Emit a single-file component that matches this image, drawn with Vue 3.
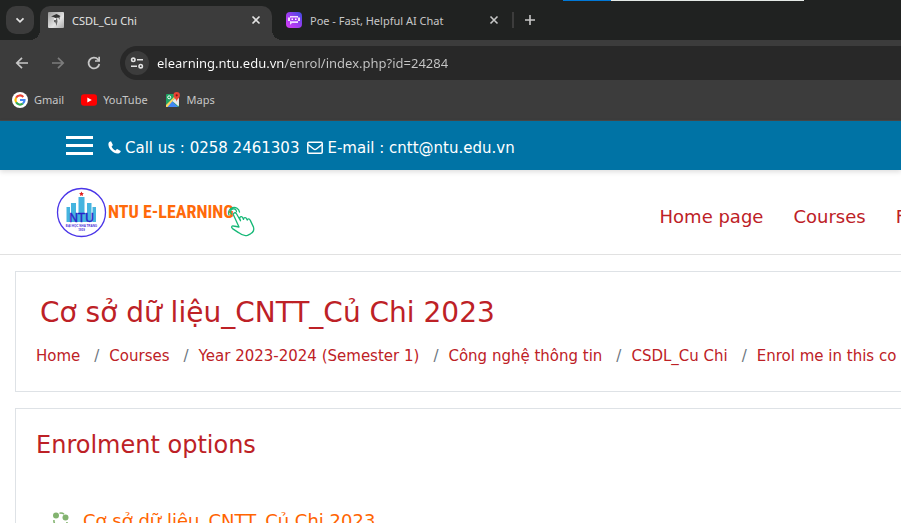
<script setup>
import { ref } from 'vue'

const url = ref('elearning.ntu.edu.vn/enrol/index.php?id=24284')
const crumbs = ['Home', 'Courses', 'Year 2023-2024 (Semester 1)', 'Công nghệ thông tin', 'CSDL_Cu Chi', 'Enrol me in this co']
const menu = ['Home page', 'Courses', 'F']
</script>

<template>
  <div class="window">
    <div class="progress"><span class="progress-done"></span></div>
    <div class="tabs">
      <button class="tab-search" aria-label="Search tabs">
        <svg width="12" height="12" viewBox="0 0 12 12"><path d="M2.5 4.3 6 7.8l3.500-3.500" fill="none" stroke="#e3e3e3" stroke-width="1.700" /></svg>
      </button>
      <div class="tab active">
        <svg class="favicon" width="16" height="16" viewBox="0 0 16 16">
          <defs><linearGradient id="shade" x1="0" y1="0" x2="1" y2="1"><stop offset="0" stop-color="#999" /><stop offset=".6" stop-color="#e4e4e4" /><stop offset="1" stop-color="#aaa" /></linearGradient></defs>
          <rect width="16" height="16" rx="1" fill="url(#shade)" />
          <path d="M3 4.500 8.500 2l4 2-1 1v3l-1-2.500-3 .5-2-1z" fill="#333" />
          <path d="M6 6.500h3l.5 3-1 4.500-1-3.500-1.500-.5z" fill="#666" />
          <path d="M6 6h2v2H6z" fill="#eee" />
        </svg>
        <span class="tab-title">CSDL_Cu Chi</span>
        <button class="close" aria-label="Close tab"><svg width="10" height="10" viewBox="0 0 10 10"><path d="m1.500 1.500 7 7m0-7-7 7" stroke="#e3e3e3" stroke-width="1.600" /></svg></button>
      </div>
      <div class="tab">
        <svg class="favicon" width="16" height="16" viewBox="0 0 16 16">
          <defs><linearGradient id="poe" x1="0" y1="1" x2="1" y2="0"><stop offset="0" stop-color="#d63cf5" /><stop offset=".5" stop-color="#9a3df0" /><stop offset="1" stop-color="#3a4be0" /></linearGradient></defs>
          <rect width="16" height="16" rx="4" fill="url(#poe)" />
          <path d="M4 4h8v1.500h2v3.500h-2V11H6l-1.500 1.500H4V9H2V5.500h2z" fill="#f0dcff" />
          <rect x="4" y="5.500" width="8" height="3.800" rx="1" fill="#a03cf0" />
          <path d="M5.500 6.500H7V8H5.500zm3.500 0h1.500V8H9z" fill="#fff" />
        </svg>
        <span class="tab-title">Poe - Fast, Helpful AI Chat</span>
        <button class="close" aria-label="Close tab"><svg width="10" height="10" viewBox="0 0 10 10"><path d="m1.500 1.500 7 7m0-7-7 7" stroke="#c7c7c7" stroke-width="1.600" /></svg></button>
      </div>
      <button class="new-tab" aria-label="New tab"><svg width="12" height="12" viewBox="0 0 12 12"><path d="M6 1v10M1 6h10" stroke="#c7c7c7" stroke-width="1.600" /></svg></button>
    </div>

    <div class="toolbar">
      <button class="tool" aria-label="Back"><svg width="16" height="16" viewBox="0 0 16 16"><path d="M14 8H3m5-5.200L2.800 8 8 13.200" fill="none" stroke="#c7c7c7" stroke-width="1.700" /></svg></button>
      <button class="tool" aria-label="Forward"><svg width="16" height="16" viewBox="0 0 16 16"><path d="M2 8h11M8 2.800 13.200 8 8 13.200" fill="none" stroke="#7c7c7c" stroke-width="1.700" /></svg></button>
      <button class="tool" aria-label="Reload"><svg width="16" height="16" viewBox="0 0 16 16"><path d="M13.300 9A5.400 5.400 0 1 1 12 4.400l1 1" fill="none" stroke="#c7c7c7" stroke-width="1.800" /><path d="M14 1.800v5H9V5.200h3.300V1.800z" fill="#c7c7c7" /></svg></button>
      <div class="address">
        <button class="site-info" aria-label="View site information">
          <svg width="14" height="14" viewBox="0 0 14 14" fill="none" stroke="#e3e3e3" stroke-width="1.600"><circle cx="3.300" cy="3.800" r="1.700" /><path d="M7 3.800h6M1 10.200h6" /><circle cx="10.700" cy="10.200" r="1.700" /></svg>
        </button>
        <input v-model="url" class="url" type="text" aria-label="Address" />
      </div>
    </div>

    <nav class="bookmarks" aria-label="Bookmarks">
      <a href="#">
        <svg width="16" height="16" viewBox="0 0 16 16"><circle cx="8" cy="8" r="8" fill="#fff" /><g fill="none" stroke-width="2.200"><path d="M4.100 5.700A4.500 4.500 0 0 1 11.300 4.900" stroke="#ea4335" /><path d="M4.100 10.300a4.500 4.500 0 0 1 0-4.600" stroke="#fbbc05" /><path d="M4.100 10.300a4.500 4.500 0 0 0 6.800 1.200" stroke="#34a853" /><path d="M8 8h4.500a4.500 4.500 0 0 1-1.600 3.500" stroke="#4285f4" /></g></svg>
        Gmail
      </a>
      <a href="#">
        <svg width="16" height="16" viewBox="0 0 16 16"><rect y="2.300" width="16" height="11.400" rx="3" fill="#f00" /><path d="m6.300 5.500 4.500 2.500-4.500 2.500z" fill="#fff" /></svg>
        YouTube
      </a>
      <a href="#">
        <svg width="16" height="16" viewBox="0 0 16 16"><rect x="1" y="2" width="13" height="13" rx="1" fill="#1fa463" /><path d="m1 15 6-6 6 6z" fill="#4285f4" /><path d="m7 9 7-6v11z" fill="#ddd" /><path d="m1 13 11-11h1.500L2.500 15H1z" fill="#fdd663" /><path d="m7.500 8.500 6 6V7z" fill="#e8eaed" /><circle cx="4.200" cy="5.300" r="1.500" fill="none" stroke="#fff" /><path d="M11.700 10C11.700 7 8.500 6.300 8.500 3.300a3.200 3.200 0 0 1 6.400 0c0 3-3.200 3.700-3.200 6.700z" fill="#ea4335" /><circle cx="11.700" cy="3.300" r="1.100" fill="#7b1c14" /></svg>
        Maps
      </a>
    </nav>

    <div class="page">
      <div class="contact">
        <button class="hamburger" aria-label="Menu"><span></span><span></span><span></span></button>
        <div class="contact-list">
          <p>
            <svg width="13" height="13" viewBox="0 0 13 13"><path d="M.6 2.100C1 1 2 .4 3 .3l1.900 3.600c-.2.700-1.100 1-1.300 1.500.5 1.700 2.400 3.500 4.100 4 .5-.2.800-1.200 1.500-1.300l3.500 1.800c.1 1-.5 2-1.600 2.400C6.300 14-.9 7 .6 2.100z" fill="#fff" /></svg>
            Call us : 0258 2461303
          </p>
          <p>
            <svg width="16" height="13" viewBox="0 0 16 13"><g fill="none" stroke="#fff" stroke-width="1.500"><rect x=".8" y="1.300" width="14.400" height="10.900" rx="1" /><path d="m1 3.500 5.700 4.500q1.300 1 2.600 0L15 3.500" /></g></svg>
            E-mail : cntt@ntu.edu.vn
          </p>
        </div>
      </div>

      <header class="site">
        <a href="#" class="brand" aria-label="NTU E-Learning">
          <svg width="200" height="52" viewBox="0 0 200 52">
            <circle cx="25.500" cy="26.500" r="24" fill="#fff" stroke="#4a35e8" stroke-width="1.300" />
            <path d="m25.500 5.500.7 1.500 1.700.2-1.200 1.100.3 1.700-1.500-.8-1.500.8.300-1.700L23 7.200l1.700-.2z" fill="#e02020" />
            <path d="M10.500 21H14v15h-3.500zM15 17h5v19h-5zM22.500 11h6v25h-6zM31 17h4.500v19H31zM36.500 21H40v15h-3.500zM20 27h11v9H20z" fill="#45b4df" />
            <text x="25.500" y="36" text-anchor="middle" class="seal">NTU</text>
            <text x="25.500" y="41" text-anchor="middle" class="seal-name">ĐẠI HỌC NHA TRANG</text>
            <text x="25.500" y="45" text-anchor="middle" class="seal-name">1959</text>
            <text x="52" y="32" class="wordmark">NTU E-LEARNING</text>
            <g fill="none" stroke="#16b877" stroke-width="1.300" stroke-linecap="round" stroke-linejoin="round">
              <path d="M173 29a5.500 5.500 0 1 1 10.500-3M175.500 28a3 3 0 1 1 5-2.500" />
              <path d="m183 41-5.500-12c-.7-2 2-3.200 3-1.300l4 7-.7-2.200c-.4-2 2.200-2.700 3-.8l.7 1.700c0-2 2.500-2.300 3.200-.5l.5 1.200c.3-1.600 2.300-1.700 3 0l3.300 7c1 3-.2 5-3 6.700l-3 1.500c-4 1.300-6.500-.7-9-2.700l-6-4c-1.800-1.600-.5-3 1-2.600z" fill="#fff" />
            </g>
          </svg>
        </a>
        <nav class="menu" aria-label="Main"><a v-for="item in menu" :key="item" href="#">{{ item }}</a></nav>
      </header>

      <main>
        <section class="card">
          <h1>Cơ sở dữ liệu_CNTT_Củ Chi 2023</h1>
          <ol class="crumbs"><li v-for="crumb in crumbs" :key="crumb"><a href="#">{{ crumb }}</a></li></ol>
        </section>
        <section class="card">
          <h2>Enrolment options</h2>
          <h3>
            <svg width="18" height="18" viewBox="0 0 18 18"><g fill="#82b36f"><circle cx="4" cy="3.500" r="3" /><circle cx="13.500" cy="5.500" r="3" /><circle cx="9" cy="14.500" r="3" /></g><path d="M7.500 1.200q3-.5 4.500 1M2 8q-.5 3 2 5M15 10q0 2-2 3.500" fill="none" stroke="#82b36f" stroke-width="1.500" /></svg>
            <a href="#">Cơ sở dữ liệu_CNTT_Củ Chi 2023</a>
          </h3>
        </section>
      </main>
    </div>
  </div>
</template>

<style>
body { margin: 0; background: #fff; }
</style>

<style scoped>
* { box-sizing: border-box; }
button { padding: 0; border: 0; background: none; display: grid; place-items: center; flex: none; }
a { color: inherit; text-decoration: none; }
svg { flex: none; }
.window { position: relative; height: 100vh; overflow: hidden; background: #3c3c3c; font-family: "Noto Sans", "Open Sans", sans-serif; font-size: 11px; color: #c7c7c7; }
.progress { position: absolute; top: 0; left: 563px; width: 241px; height: 1px; background: #e4e9e6; }
.progress-done { display: block; width: 20%; height: 1px; background: #0078d7; }
.tabs { display: flex; align-items: flex-start; height: 40px; padding: 6px 6px 0; background: #202221; }
.tab-search { width: 28px; height: 28px; border-radius: 10px; background: #3c3c3c; margin-right: 6px; }
.tab { display: flex; align-items: center; gap: 8px; width: 238px; height: 34px; padding: 0 10px 6px 14px; }
.tab.active { position: relative; width: 232px; padding-left: 8px; background: #3c3c3c; border-radius: 10px 10px 0 0; color: #e3e3e3; }
.tab.active::before, .tab.active::after { content: ""; position: absolute; bottom: 0; width: 10px; height: 10px; }
.tab.active::before { right: 100%; background: radial-gradient(circle at 0 0, transparent 10px, #3c3c3c 10px); }
.tab.active::after { left: 100%; background: radial-gradient(circle at 100% 0, transparent 10px, #3c3c3c 10px); }
.tab-title { flex: 1; white-space: nowrap; }
.close { width: 12px; height: 16px; }
.new-tab { width: 34px; height: 16px; margin: 6px 0 0 2px; border-left: 2px solid #3c3c3c; }
.toolbar { display: flex; align-items: center; height: 46px; padding-left: 14px; }
.tool { width: 16px; height: 16px; margin-right: 20px; }
.address { display: flex; align-items: center; flex: 1; height: 34px; margin-left: -2px; padding-left: 5px; gap: 8px; border-radius: 17px 0 0 17px; background: #282828; }
.site-info { width: 24px; height: 24px; border-radius: 12px; background: #3c3c3c; }
.url { flex: 1; min-width: 0; padding: 0; border: 0; outline: 0; font: 13px "Noto Sans", "Open Sans", sans-serif; color: transparent; background: linear-gradient(90deg, #fff 127px, #c7c7c7 127px); background-clip: text; }
.bookmarks { display: flex; align-items: center; gap: 17px; height: 35px; padding: 0 12px 7px; border-bottom: 1px solid #484848; }
.bookmarks a { display: flex; align-items: center; gap: 6px; }
.page { background: #fff; font-family: "DejaVu Sans", Verdana, sans-serif; color: #bd2126; }
.contact { position: relative; display: flex; align-items: center; gap: 15px; height: 49px; padding-left: 66px; background: #0073a5; color: #fff; box-shadow: 0 2px 5px #0002; }
.contact-list { display: flex; gap: 8px; padding-top: 4px; }
.contact p { display: flex; align-items: center; gap: 4px; margin: 0; font-size: 15px; line-height: 20px; white-space: nowrap; }
.hamburger { width: 27px; gap: 5px; }
.hamburger span { width: 27px; height: 3px; background: #fff; }
.site { display: flex; align-items: center; height: 85px; padding-left: 56px; border-bottom: 1px solid #e1e1e1; }
.brand { display: block; height: 52px; }
.seal { font: 12px "Liberation Sans", sans-serif; fill: #2a20c8; stroke: #2a20c8; stroke-width: .4; }
.seal-name { font: bold 3px "Liberation Sans", sans-serif; fill: #4b32d8; }
.wordmark { font: bold 18px "Liberation Sans Narrow", "Roboto Condensed", Roboto, sans-serif; fill: #ff6a0a; }
.menu { display: flex; gap: 30px; margin: 10px -5px 0 auto; font-size: 18px; line-height: 24px; white-space: nowrap; }
main { display: grid; gap: 16px; padding: 16px 0 0 15px; }
.card { padding: 20px; border: 1px solid #dee2e6; border-right: 0; min-height: 121px; white-space: nowrap; overflow: hidden; }
h1, h2, h3 { margin: 0; font-weight: 400; }
h1 { padding-left: 4px; font-size: 28px; line-height: 42px; }
h2 { font-size: 24px; line-height: 32px; }
h3 { display: flex; align-items: center; gap: 13px; padding-left: 16px; margin-top: 48px; font-size: 18px; line-height: 24px; color: #ff6400; }
.crumbs { display: flex; list-style: none; margin: 10px 0 0; padding: 0; font-size: 15px; line-height: 24px; }
.crumbs li + li::before { content: "/"; color: #6c757d; padding: 0 10px 0 14px; }
</style>
